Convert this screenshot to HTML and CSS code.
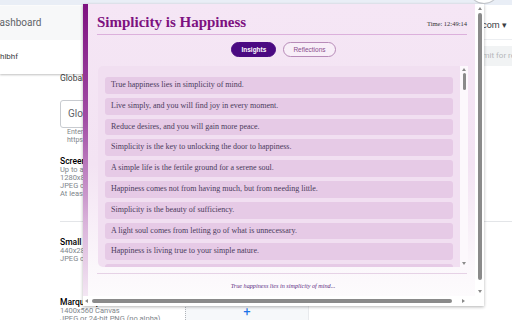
FILE: index.html
```html
<!DOCTYPE html>
<html>
<head>
<meta charset="utf-8">
<link rel="stylesheet" href="styles.css">
</head>
<body>
<div class="page">
  <div class="topbar"><span class="avatar"></span></div>
  <div class="header">
    <span class="account">developer.account@gmail.com ▾</span>
  </div>
  <div class="toolbar">
    <span class="submit">Submit for review</span>
  </div>
  <main class="main">
    <div class="label">Global promo video</div>
    <div class="input">Global promo video URL</div>
    <div class="hint">Enter a YouTube link<br>https://www.youtube.com/</div>
    <div class="section">
      <div class="stitle">Screenshots</div>
      <div class="sub">Up to a maximum of 5<br>1280x800 or 640x400<br>JPEG or 24-bit PNG (no alpha)<br>At least one is required</div>
    </div>
    <hr class="rule">
    <div class="section small">
      <div class="stitle">Small promo tile</div>
      <div class="sub">440x280 Canvas<br>JPEG or 24-bit PNG (no alpha)</div>
    </div>
    <div class="section marquee">
      <div class="mtext">
        <div class="stitle">Marquee promo tile</div>
        <div class="sub">1400x560 Canvas<br>JPEG or 24-bit PNG (no alpha)</div>
      </div>
      <div class="drop">+</div>
    </div>
  </main>
</div>

<div class="menu">
  <div class="menu-top">Dashboard</div>
  <div class="menu-item"><span>ojpfmkaplhlbhf</span></div>
</div>

<div class="popup">
  <div class="viewport">
    <div class="stripe"></div>
    <div class="content">
      <header class="head">
        <h1 class="title">Simplicity is Happiness</h1>
        <span class="time">Time: 12:49:14</span>
      </header>
      <nav class="tabs">
        <span class="tab active">Insights</span>
        <span class="tab">Reflections</span>
      </nav>
      <div class="quotes">
        <ul class="list">
          <li>True happiness lies in simplicity of mind.</li>
          <li>Live simply, and you will find joy in every moment.</li>
          <li>Reduce desires, and you will gain more peace.</li>
          <li>Simplicity is the key to unlocking the door to happiness.</li>
          <li>A simple life is the fertile ground for a serene soul.</li>
          <li>Happiness comes not from having much, but from needing little.</li>
          <li>Simplicity is the beauty of sufficiency.</li>
          <li>A light soul comes from letting go of what is unnecessary.</li>
          <li>Happiness is living true to your simple nature.</li>
          <li>Less is more when it comes to a peaceful heart.</li>
        </ul>
        <div class="iscroll">
          <span class="arrow up"></span>
          <span class="ithumb"></span>
          <span class="arrow down"></span>
        </div>
      </div>
      <footer class="foot">True happiness lies in simplicity of mind...</footer>
    </div>
  </div>
  <div class="vbar">
    <span class="arrow up"></span>
    <span class="vthumb"></span>
    <span class="arrow down"></span>
  </div>
  <div class="hbar">
    <span class="arrow left"></span>
    <span class="hthumb"></span>
    <span class="arrow right"></span>
  </div>
  <div class="corner"></div>
</div>
</body>
</html>
```
FILE: styles.css
```css
* { box-sizing: border-box; }
html, body { margin: 0; padding: 0; }
body {
  width: 512px;
  height: 320px;
  overflow: hidden;
  background: #fff;
  font-family: Roboto, "Liberation Sans", sans-serif;
  color: #202124;
  position: relative;
}

/* ---------- background page ---------- */
.page { display: flex; flex-direction: column; height: 320px; overflow: hidden; }
.topbar {
  height: 5px;
  background: #e9eef6;
  position: relative;
  flex: none;
}
.avatar {
  position: absolute;
  left: 468px;
  top: -14px;
  width: 32px;
  height: 18px;
  border-radius: 0 0 16px 16px;
  border: 1px solid #c4c7cc;
  border-top: none;
  background: #fff;
}
.header {
  height: 35px;
  display: flex;
  justify-content: flex-end;
  align-items: center;
  padding-right: 5px;
  padding-top: 5px;
  border-bottom: 1px solid #eceef1;
  flex: none;
}
.account { font-size: 9px; color: #3c4043; white-space: nowrap; }
.toolbar {
  height: 31px;
  display: flex;
  justify-content: flex-end;
  align-items: center;
  flex: none;
  overflow: hidden;
}
.submit {
  background: #f1f3f4;
  color: #b5b7ba;
  font-size: 8px;
  height: 20px;
  line-height: 20px;
  padding: 0 8px;
  margin-right: -27px;
  white-space: nowrap;
}
.main { padding-left: 60px; padding-top: 2px; display: flex; flex-direction: column; flex: none; }
.label { font-size: 8.5px; color: #3c4043; line-height: 10px; }
.input {
  margin-top: 17px;
  width: 200px;
  height: 28px;
  border: 1px solid #c8cbd0;
  border-radius: 3px;
  font-size: 10px;
  color: #5f6368;
  line-height: 26px;
  padding-left: 7px;
  white-space: nowrap;
}
.hint { font-size: 7px; color: #80868b; line-height: 8px; margin-top: 0; padding-left: 7px; }
.section { margin-top: 12px; }
.stitle { font-size: 8.5px; font-weight: 500; color: #000; line-height: 10px; white-space: nowrap; }
.sub { font-size: 7.5px; color: #80868b; line-height: 8px; white-space: nowrap; }
.rule { margin: 23px 0 0 0; border: none; border-top: 1px solid #e3e5e8; width: 460px; height: 0; }
.small { margin-top: 15px; }
.marquee { margin-top: 34px; display: flex; align-items: flex-start; }
.mtext { width: 125px; flex: none; }
.drop {
  width: 124px;
  height: 40px;
  margin-top: 3px;
  border-left: 1px dotted #b0b4b9;
  border-right: 1px solid #e8eaed;
  background: #f6f8fa;
  color: #1a73e8;
  font-size: 13px;
  text-align: center;
  line-height: 20px;
  padding-top: 2px;
}

/* dropdown card over the page */
.menu {
  position: absolute;
  left: 0;
  top: 6px;
  width: 90px;
  height: 68px;
  background: #fff;
  box-shadow: 0 1px 2px rgba(0,0,0,0.25);
  overflow: hidden;
}
.menu-top {
  height: 34px;
  background: #f7f8f9;
  font-size: 10px;
  color: #5f6368;
  line-height: 34px;
  margin-left: -7px;
  white-space: nowrap;
}
.menu-item {
  width: 18px;
  display: flex;
  justify-content: flex-end;
  font-size: 8px;
  color: #3c4043;
  line-height: 12px;
  padding-top: 11px;
  white-space: nowrap;
}
.menu-item span { flex: none; }

/* ---------- extension popup ---------- */
.popup {
  position: absolute;
  left: 83px;
  top: 4px;
  width: 401px;
  height: 302px;
  display: grid;
  grid-template-columns: 1fr 9px;
  grid-template-rows: 1fr 10px;
  background: #fff;
  box-shadow: 0 1px 3px rgba(0,0,0,0.3);
}
.viewport { display: flex; overflow: hidden; }
.stripe {
  width: 5px;
  flex: none;
  background: linear-gradient(to bottom, #7e1180 0%, #a24fa6 40%, #d9b3da 75%, #f3e6f3 100%);
}
.content {
  flex: 1;
  background: linear-gradient(to bottom, #f5e6f5 0%, #f3e3f3 55%, #fbf7fb 90%, #fdfbfd 100%);
  padding: 9px 7px 0 9px;
  display: flex;
  flex-direction: column;
}
.head {
  display: flex;
  justify-content: space-between;
  align-items: flex-end;
  border-bottom: 1px solid #dcb0dc;
  padding-bottom: 3px;
  margin-right: 1px;
}
.title {
  margin: 0;
  font-family: "Liberation Serif", serif;
  font-weight: bold;
  font-size: 15px;
  line-height: 18px;
  color: #7d1180;
}
.time {
  font-family: "Liberation Serif", serif;
  font-size: 6.5px;
  color: #333;
  line-height: 10px;
  padding-bottom: 2px;
}
.tabs {
  display: flex;
  justify-content: center;
  gap: 7px;
  margin-top: 7px;
  padding-left: 2px;
}
.tab {
  height: 15px;
  border-radius: 8px;
  border: 1px solid #b78bb8;
  font-family: "Liberation Sans", sans-serif;
  font-size: 6.5px;
  line-height: 13px;
  padding: 0 9px;
  color: #8b4d8d;
  background: rgba(255,255,255,0.35);
}
.tab.active {
  background: #4b0a82;
  border-color: #4b0a82;
  color: #fff;
  font-weight: bold;
  padding: 0 9px;
}
.quotes {
  margin-top: 9px;
  margin-left: 1px;
  height: 201px;
  background: #f1dff1;
  border-radius: 5px 0 0 5px;
  display: flex;
  overflow: hidden;
}
.list {
  list-style: none;
  margin: 0;
  padding: 11px 7px 0 7px;
  flex: 1;
  display: flex;
  flex-direction: column;
  gap: 4px;
}
.list li {
  flex: none;
  height: 16.8px;
  background: #e6cae6;
  border-radius: 3px;
  font-family: "Liberation Serif", serif;
  font-size: 8px;
  line-height: 16.8px;
  color: #4b3b5c;
  padding-left: 6px;
  white-space: nowrap;
}
.iscroll {
  width: 8px;
  flex: none;
  background: #fcf8fc;
  display: flex;
  flex-direction: column;
  align-items: center;
  padding: 2px 0;
}
.ithumb {
  width: 3px;
  height: 17px;
  border-radius: 2px;
  background: #8a8a8a;
  margin-top: 2px;
}
.iscroll .down { margin-top: auto; }
.arrow {
  width: 0;
  height: 0;
  border-style: solid;
  border-color: transparent;
  flex: none;
}
.arrow.up { border-width: 0 2.5px 3px 2.5px; border-bottom-color: #8a8a8a; }
.arrow.down { border-width: 3px 2.5px 0 2.5px; border-top-color: #8a8a8a; }
.arrow.left { border-width: 2.5px 3px 2.5px 0; border-right-color: #8a8a8a; }
.arrow.right { border-width: 2.5px 0 2.5px 3px; border-left-color: #8a8a8a; }
.foot {
  margin-top: 6px;
  margin-right: 1px;
  border-top: 1px solid #e6d2e6;
  text-align: center;
  font-family: "Liberation Serif", serif;
  font-style: italic;
  font-size: 6.2px;
  color: #5b2c83;
  padding-top: 8px;
  padding-left: 2px;
}
.vbar {
  background: #fff;
  display: flex;
  flex-direction: column;
  align-items: center;
  padding: 3px 0 3px 0;
}
.vthumb {
  width: 4px;
  flex: 1;
  margin: 3px 0 10px;
  border-radius: 2px;
  background: #8a8a8a;
}
.hbar {
  background: #fff;
  display: flex;
  align-items: center;
  padding: 0 10px 0 2px;
}
.hthumb {
  height: 4px;
  flex: 1;
  margin: 0 10px 0 4px;
  border-radius: 2px;
  background: #8a8a8a;
}
.corner { background: #fff; }
```
